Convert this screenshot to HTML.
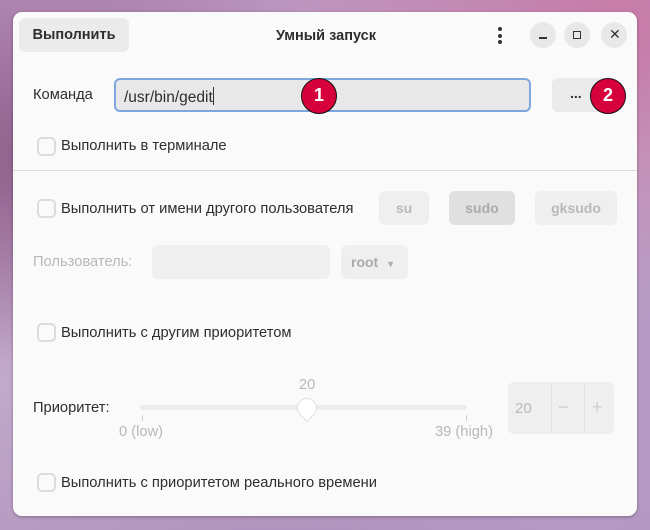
<!DOCTYPE html>
<html><head><meta charset="utf-8"><style>
*{margin:0;padding:0;box-sizing:border-box}
body{width:650px;height:530px;overflow:hidden;position:relative;font-family:"Liberation Sans",sans-serif;font-size:14.7px;color:#2e2e2e;
background:radial-gradient(ellipse at 10% 30%,#8a5a86 0,transparent 40%),radial-gradient(ellipse at 90% 90%,#b89bc6 0,transparent 50%),radial-gradient(ellipse at 95% 5%,#c77aa8 0,transparent 40%),linear-gradient(160deg,#b890bc,#c2a8cc 50%,#a886b2);}
.win{position:absolute;left:13px;top:12px;width:624px;height:504px;background:#fafafa;border-radius:9px;box-shadow:0 1px 3px rgba(0,0,0,.3)}
.a{position:absolute;white-space:nowrap}
.btn{position:absolute;border-radius:6px;background:#ebebeb;text-align:center;font-weight:bold;font-size:14px}
.cb{position:absolute;width:19px;height:19px;border:2px solid #dcdcdc;border-radius:5px;background:#fafafa}
.circ{position:absolute;width:36px;height:36px;border-radius:50%;background:#d6003c;border:1.5px solid #111;color:#fff;font-weight:bold;font-size:18px;text-align:center;line-height:33px}
.g{color:#b8b8b8}
.wb{position:absolute;width:26px;height:26px;border-radius:50%;background:#e8e8e8;top:22px}
</style></head><body>
<div class="win">
<div class="btn" style="left:6px;top:6px;width:110px;height:34px;line-height:34px;font-size:14.5px">Выполнить</div>
<div class="a" style="left:263px;top:16px;font-weight:bold;font-size:14.5px">Умный запуск</div>
<div class="a" style="left:485px;top:15px;width:4px">
<div style="width:4px;height:4px;border-radius:2px;background:#333;margin-bottom:2.5px"></div><div style="width:4px;height:4px;border-radius:2px;background:#333;margin-bottom:2.5px"></div><div style="width:4px;height:4px;border-radius:2px;background:#333"></div></div>
</div>
<div class="wb" style="left:530px"><div style="position:absolute;left:9px;top:15px;width:8px;height:1.5px;background:#333"></div></div>
<div class="wb" style="left:564px"><div style="position:absolute;left:9px;top:9px;width:8px;height:8px;border:1.5px solid #333"></div></div>
<div class="wb" style="left:601px"><div class="a" style="left:8px;top:4px;font-size:14px;color:#333">✕</div></div>
<div class="a" style="left:33px;top:87px">Команда</div>
<div style="position:absolute;left:114px;top:78px;width:417px;height:34px;border:2px solid #7ea6dc;border-radius:6px;background:#e8e8e8"></div>
<div class="a" style="left:124px;top:87px;font-size:15.5px">/usr/bin/gedit<span style="display:inline-block;width:1px;height:18px;background:#333;vertical-align:-3px"></span></div>
<div class="circ" style="left:301px;top:78px">1</div>
<div class="btn" style="left:552px;top:78px;width:66px;height:34px;line-height:30px;text-align:left;padding-left:18px">...</div>
<div class="circ" style="left:590px;top:78px">2</div>
<div class="cb" style="left:37px;top:137px"></div>
<div class="a" style="left:61px;top:138px">Выполнить в терминале</div>
<div style="position:absolute;left:13px;top:170px;width:624px;height:1px;background:#dadada"></div>
<div class="cb" style="left:37px;top:199px"></div>
<div class="a" style="left:61px;top:201px">Выполнить от имени другого пользователя</div>
<div class="btn g" style="left:379px;top:191px;width:50px;height:34px;line-height:34px;background:#efefef">su</div>
<div class="btn" style="left:449px;top:191px;width:66px;height:34px;line-height:34px;background:#e0e0e0;color:#aaa">sudo</div>
<div class="btn g" style="left:535px;top:191px;width:82px;height:34px;line-height:34px;background:#efefef">gksudo</div>
<div class="a g" style="left:33px;top:254px">Пользователь:</div>
<div style="position:absolute;left:152px;top:245px;width:178px;height:34px;border-radius:6px;background:#efefef"></div>
<div class="btn" style="left:341px;top:245px;width:67px;height:34px;line-height:34px;background:#efefef;color:#aaa;text-align:left;padding-left:10px">root <span style="font-size:9px;margin-left:4px">▼</span></div>
<div class="cb" style="left:37px;top:323px"></div>
<div class="a" style="left:61px;top:325px">Выполнить с другим приоритетом</div>
<div class="a g" style="left:299px;top:377px">20</div>
<div class="a" style="left:33px;top:400px">Приоритет:</div>
<div style="position:absolute;left:140px;top:405px;width:327px;height:5px;border-radius:3px;background:#ececec"></div>
<div style="position:absolute;left:297px;top:398px;width:20px;height:20px;border-radius:50% 50% 50% 0;transform:rotate(-45deg);background:#fff;border:1px solid #e0e0e0"></div>
<div style="position:absolute;left:142px;top:415px;width:1px;height:6px;background:#ccc"></div>
<div style="position:absolute;left:466px;top:415px;width:1px;height:6px;background:#ccc"></div>
<div class="a g" style="left:119px;top:424px">0 (low)</div>
<div class="a g" style="left:435px;top:424px">39 (high)</div>
<div style="position:absolute;left:508px;top:382px;width:106px;height:52px;border-radius:6px;background:#efefef"></div>
<div style="position:absolute;left:551px;top:382px;width:1px;height:52px;background:#e4e4e4"></div>
<div style="position:absolute;left:584px;top:382px;width:1px;height:52px;background:#e4e4e4"></div>
<div class="a g" style="left:515px;top:400px;font-size:15px">20</div>
<div class="a" style="left:558px;top:397px;font-size:18px;color:#ccc">−</div>
<div class="a" style="left:592px;top:397px;font-size:18px;color:#ccc">+</div>
<div class="cb" style="left:37px;top:473px"></div>
<div class="a" style="left:61px;top:475px">Выполнить с приоритетом реального времени</div>
</body></html>
